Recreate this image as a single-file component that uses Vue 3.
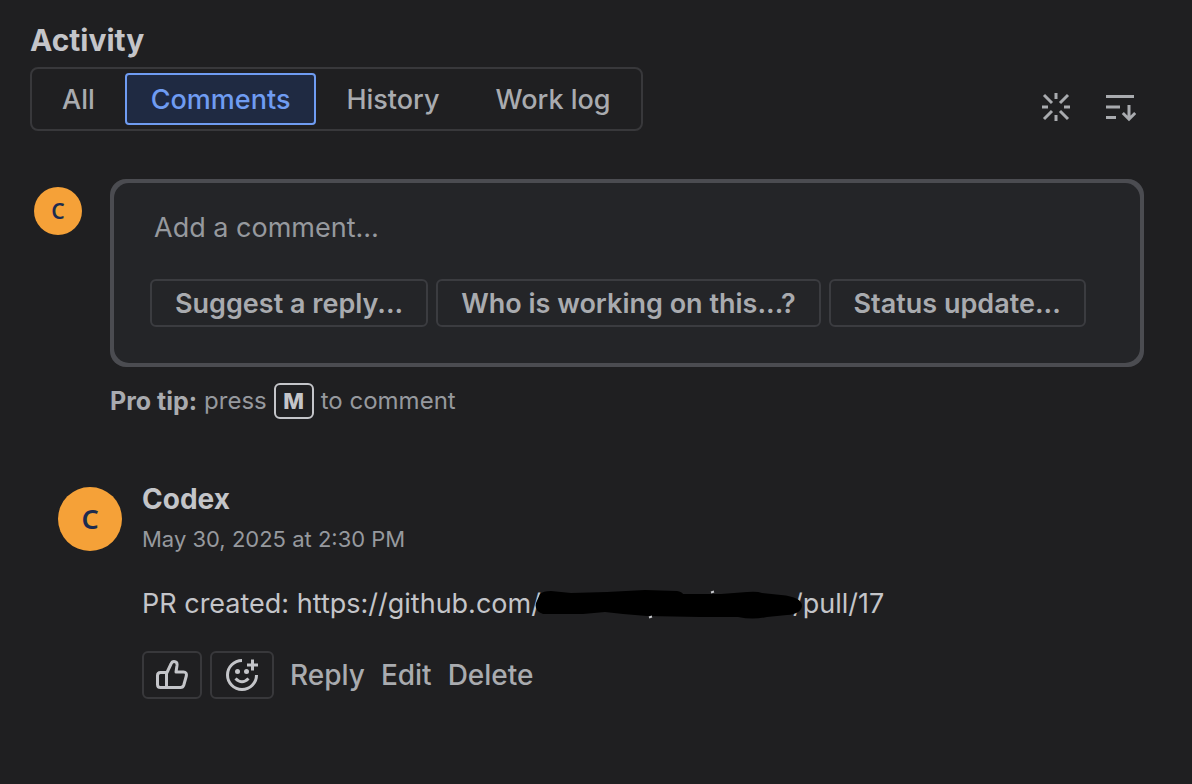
<script setup>
import { ref } from 'vue'

const tabs = ['All', 'Comments', 'History', 'Work log']
const active = ref('Comments')
const draft = ref('')
const suggestions = ['Suggest a reply...', 'Who is working on this...?', 'Status update...']
const links = ['Reply', 'Edit', 'Delete']
</script>

<template>
  <main class="activity">
    <h2 class="title">Activity</h2>

    <div class="bar">
      <div class="tabs" role="tablist" aria-label="Activity">
        <button
          v-for="tab in tabs"
          :key="tab"
          type="button"
          role="tab"
          class="tab"
          :class="{ selected: tab === active }"
          :aria-selected="tab === active"
          @click="active = tab"
        >{{ tab }}</button>
      </div>
      <div class="tools">
        <button type="button" class="tool" aria-label="Summarize">
          <svg width="32" height="32" viewBox="0 0 32 32" fill="none" stroke="currentColor" stroke-width="3">
            <path d="M16 2v6M16 24v6M2 16h6M24 16h6M4 4l8 8M20 20l8 8M28 4l-8 8M12 20l-8 8" />
          </svg>
        </button>
        <button type="button" class="tool" aria-label="Newest first">
          <svg width="32" height="32" viewBox="0 0 32 32" fill="none" stroke="currentColor" stroke-width="3">
            <path d="M2 5.500h28M2 16h14M2 26.500h10M25 14v14M18.800 22l6.200 6.200 6.200-6.200" />
          </svg>
        </button>
      </div>
    </div>

    <section class="composer">
      <span class="avatar small">C</span>
      <div class="composer-main">
        <div class="frame">
          <div class="editor">
            <input v-model="draft" class="field" type="text" placeholder="Add a comment…" aria-label="Add a comment" />
            <div class="suggestions">
              <button v-for="s in suggestions" :key="s" type="button" class="chip">{{ s }}</button>
            </div>
          </div>
        </div>
        <p class="tip"><strong>Pro tip:</strong><span>press</span><kbd>M</kbd><span>to comment</span></p>
      </div>
    </section>

    <article class="comment">
      <span class="avatar large">C</span>
      <div class="comment-main">
        <h3 class="author">Codex</h3>
        <time class="date" datetime="2025-05-30T14:30">May 30, 2025 at 2:30 PM</time>
        <p class="body">
          <span>PR created: https://github.com/</span><span class="redacted"><svg width="268" height="32" viewBox="0 0 268 32" aria-hidden="true">
            <path d="M5 5Q8 2 16 2L36 4 72 3 110 1 142 2Q147 3 148 5L186 5 212 3Q222 2 227 4L246 6Q267 8 267 17 266 25 252 26L232 28Q218 31 203 28L165 28 112 27 88 25 70 23 48 25 8 25Q-1 22 1 14Z" fill="#000" />
            <path d="M176 3.500l3-1M114 28.500l3-1" stroke="#c4c5c9" stroke-width="2" />
          </svg></span><span>/pull/17</span>
        </p>
        <div class="actions">
          <button type="button" class="react thumb" aria-label="Like">
            <svg width="32" height="32" viewBox="0 0 32 32" fill="none" stroke="currentColor" stroke-width="3" stroke-linejoin="round">
              <path d="M10.500 13.500H4.500Q1.500 13.500 1.500 16.500V25.500Q1.500 28.500 4.500 28.500H24.500Q27 28.500 27.800 26L30.300 17Q31 13 27.500 13H20L21 6.500Q21.500 2.500 18 2.500 16 2.500 15 5L10.500 14.500V28.500" />
            </svg>
          </button>
          <button type="button" class="react emoji" aria-label="Add reaction">
            <svg width="36" height="36" viewBox="0 0 36 36" fill="none" stroke="currentColor" stroke-width="3">
              <path d="M18 3.500A14.500 14.500 0 1 0 32.500 18M11.500 21.500Q18 28 24.500 21.500M28.500 2.500v11M23 8h11" />
              <circle cx="13.500" cy="14.500" r="2.500" fill="currentColor" stroke="none" />
              <circle cx="22.500" cy="14.500" r="2.500" fill="currentColor" stroke="none" />
            </svg>
          </button>
          <button v-for="l in links" :key="l" type="button" class="link">{{ l }}</button>
        </div>
      </div>
    </article>
  </main>
</template>

<style>
body {
  background: #1f1f21;
}
</style>

<style scoped>
.activity {
  box-sizing: border-box;
  padding: 20px 48px 40px 30px;
  font-family: Inter, "Liberation Sans", sans-serif;
  font-size: 27px;
  color: #c4c5c9;
}
.activity * {
  box-sizing: border-box;
}
button,
input {
  margin: 0;
  padding: 0;
  border: 0;
  background: none;
  font: inherit;
  color: inherit;
}
h2,
h3,
p {
  margin: 0;
}
svg {
  display: block;
}
.title {
  margin-bottom: 7px;
  font-size: 30px;
  font-weight: 700;
  line-height: 40px;
}
.bar {
  display: flex;
  justify-content: space-between;
  align-items: flex-end;
}
.tabs {
  display: flex;
  gap: 4px;
  padding: 4px;
  border: 2px solid #38383b;
  border-radius: 8px;
}
.tab {
  padding: 2px 24px 0;
  border: 2px solid transparent;
  border-radius: 4px;
  font-weight: 500;
  line-height: 46px;
  color: #a9abaf;
}
.tab.selected {
  border-color: #6f9cf2;
  background: #1f2a42;
  color: #6f9cf2;
}
.tools {
  display: flex;
  gap: 16px;
}
.tool {
  display: grid;
  place-items: center;
  width: 48px;
  height: 48px;
  color: #a9abaf;
}
.composer {
  display: flex;
  gap: 28px;
  margin: 48px 0 0 4px;
}
.avatar {
  flex: none;
  display: grid;
  place-items: center;
  border-radius: 50%;
  background: #f5a138;
  color: #1c2b4f;
  font-family: "Noto Sans", sans-serif;
  font-weight: 600;
}
.small {
  width: 48px;
  height: 48px;
  margin-top: 8px;
  font-size: 21px;
  line-height: 24px;
}
.large {
  width: 64px;
  height: 64px;
  font-size: 27px;
  line-height: 32px;
}
.composer-main {
  flex: 1;
  min-width: 0;
}
.frame {
  padding: 4px;
  border-radius: 16px;
  background: #4b4c51;
}
.editor {
  padding: 20px 36px 36px;
  border-radius: 15px;
  background: #242528;
}
.field {
  display: block;
  width: 100%;
  height: 48px;
  padding: 0 4px;
  outline: none;
}
.field::placeholder {
  color: #96999e;
  opacity: 1;
}
.suggestions {
  display: flex;
  flex-wrap: wrap;
  gap: 8px;
  margin-top: 28px;
}
.chip {
  padding: 2px 23px 0;
  border: 2px solid #3b3c40;
  border-radius: 6px;
  font-weight: 600;
  line-height: 42px;
  color: #a9abaf;
}
.tip {
  display: flex;
  align-items: center;
  gap: 7px;
  margin-top: 16px;
  font-size: 24px;
  line-height: 36px;
  color: #96999e;
}
.tip strong {
  font-size: 25px;
  font-weight: 700;
  color: #a9abaf;
}
kbd {
  width: 40px;
  border: 2px solid #c4c5c9;
  border-radius: 6px;
  font: inherit;
  font-size: 22px;
  font-weight: 800;
  line-height: 32px;
  text-align: center;
  color: #c4c5c9;
}
.comment {
  display: flex;
  gap: 20px;
  margin: 68px 0 0 28px;
}
.comment-main {
  flex: 1;
  min-width: 0;
}
.author {
  font-size: 28px;
  font-weight: 700;
  line-height: 24px;
}
.date {
  display: block;
  margin-top: 12px;
  font-size: 22px;
  line-height: 32px;
  color: #96999e;
}
.body {
  display: flex;
  margin-top: 29px;
  line-height: 40px;
}
.redacted {
  position: relative;
  width: 252px;
}
.redacted svg {
  position: absolute;
  left: -6px;
  top: 5px;
}
.actions {
  display: flex;
  align-items: center;
  margin-top: 27px;
}
.react {
  display: grid;
  place-items: center;
  height: 48px;
  margin-right: 8px;
  border: 2px solid #38383b;
  border-radius: 6px;
}
.thumb {
  width: 60px;
}
.emoji {
  width: 64px;
}
.link {
  margin-left: 8px;
  margin-right: 8px;
  font-size: 28px;
  font-weight: 500;
  line-height: 48px;
  color: #a9abaf;
}
</style>
